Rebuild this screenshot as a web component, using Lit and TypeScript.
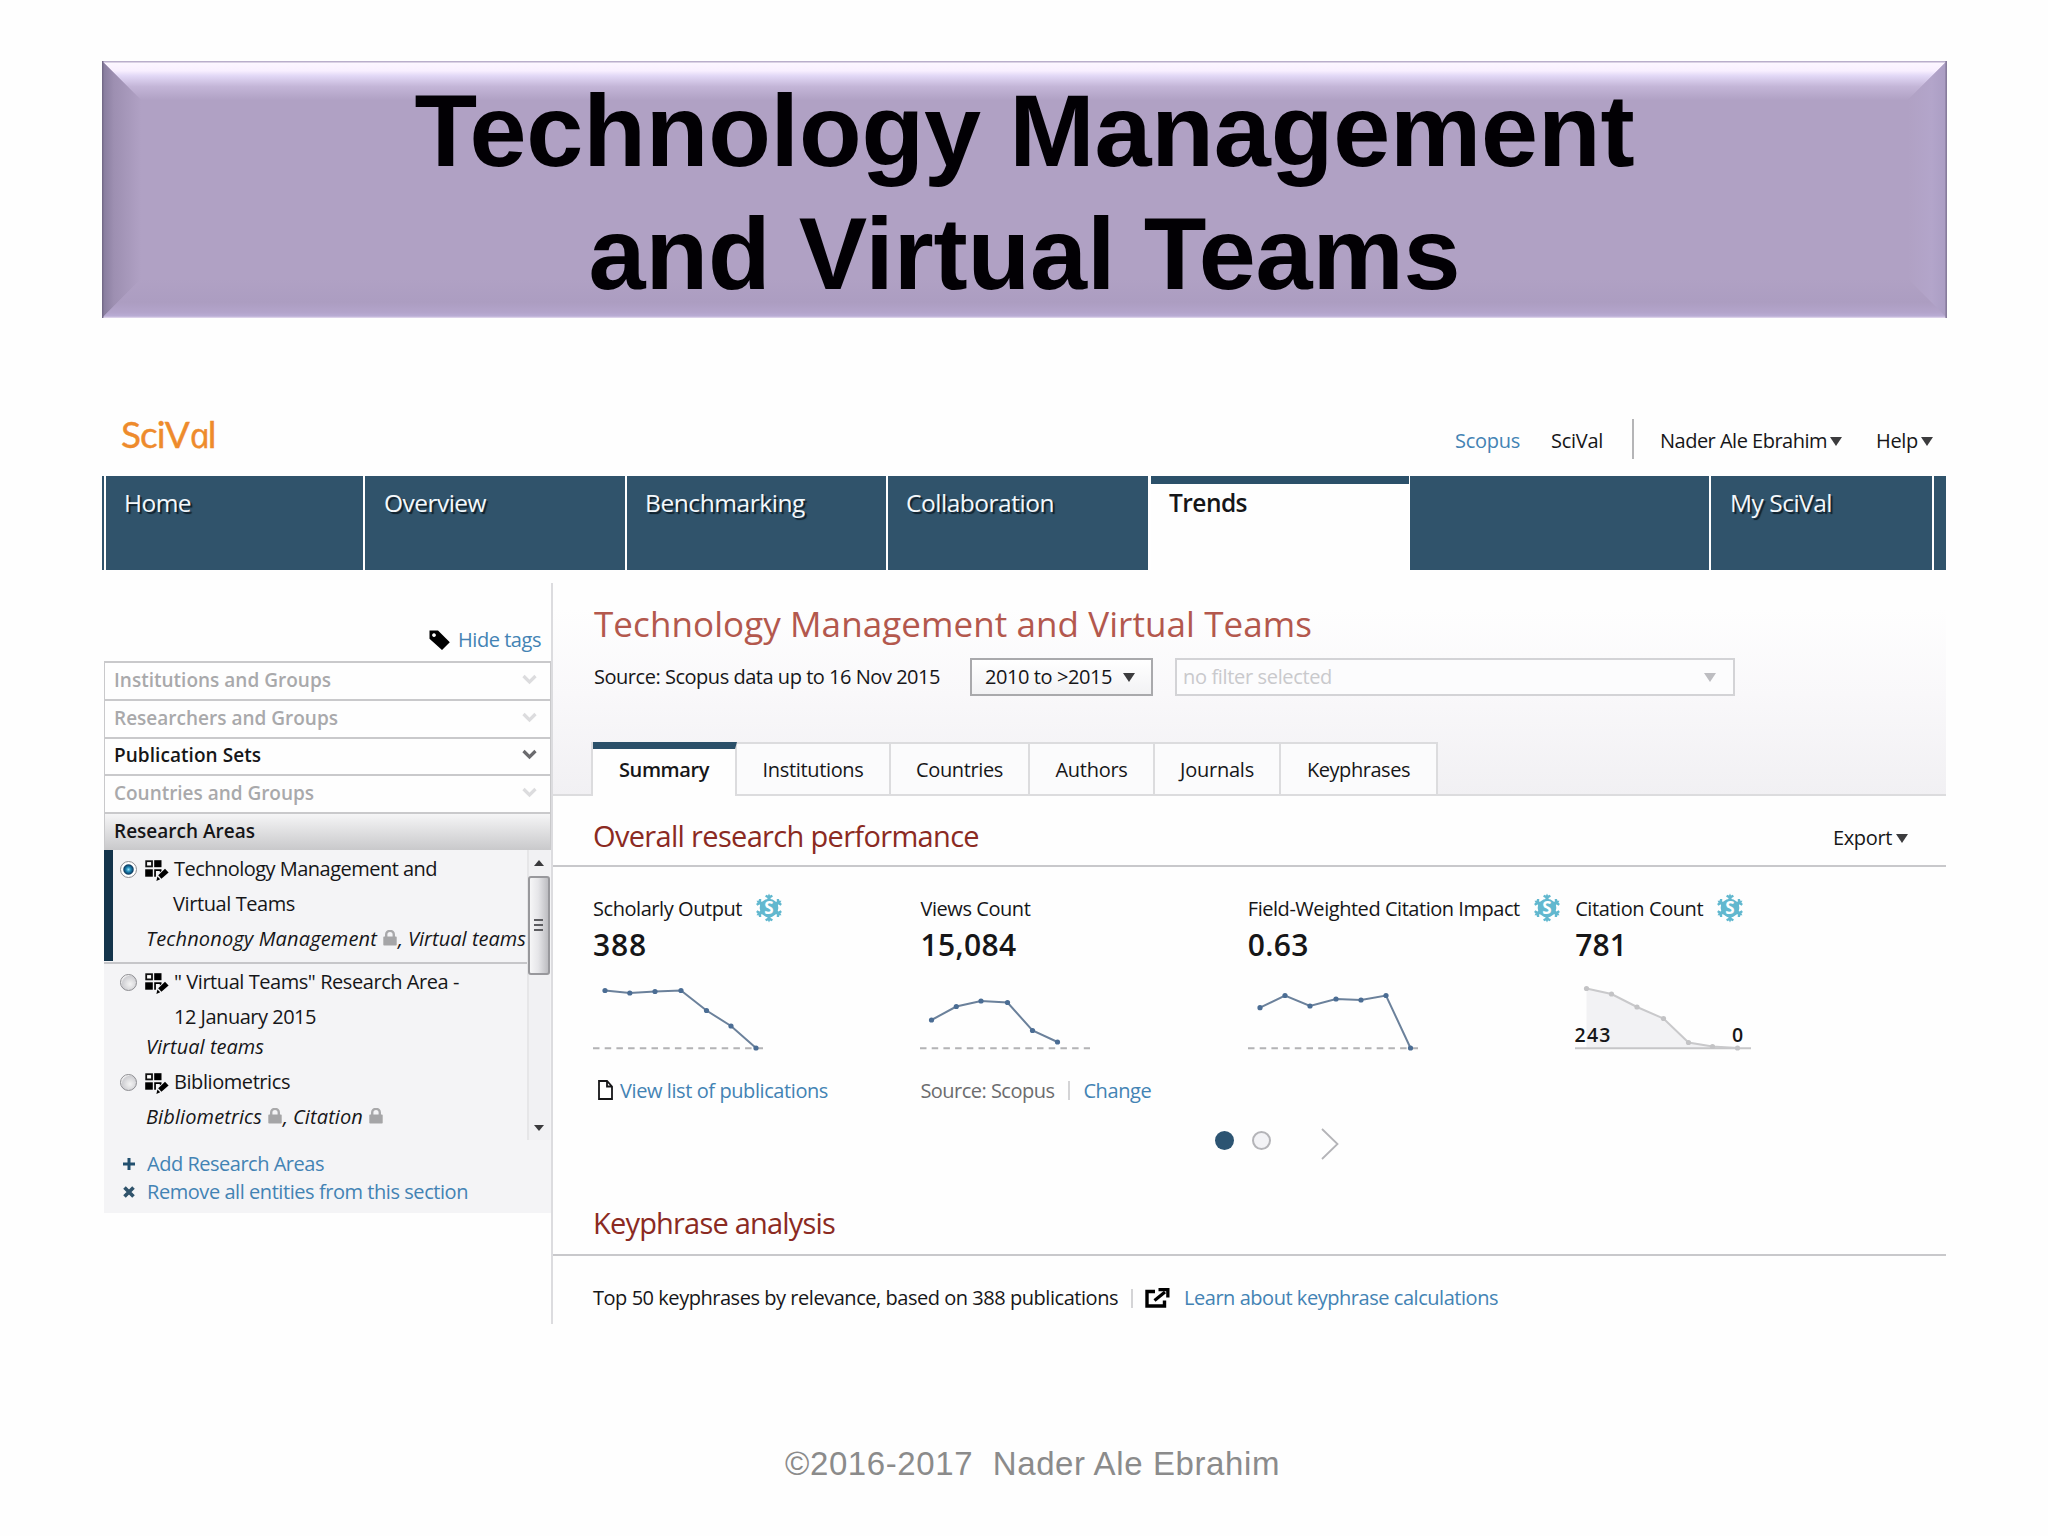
import { LitElement, html, svg, css } from "lit";
import { customElement, property } from "lit/decorators.js";

/* A single line of text tracked so that it fills an exact measure. */
@customElement("fit-text")
class FitText extends LitElement {
  @property({ type: Number }) w = 0;
  static styles = css`
    :host { display: block; flex: none; white-space: pre; }
    .ink { display: inline-block; white-space: pre; }
  `;
  firstUpdated() {
    const ink = this.renderRoot.querySelector(".ink") as HTMLElement;
    const count = (this.textContent || "").length;
    if (!this.w || !count) return;
    const natural = ink.getBoundingClientRect().width;
    this.style.width = `${this.w}px`;
    ink.style.letterSpacing = `${((this.w - natural) / count).toFixed(3)}px`;
  }
  render() {
    return html`<span class="ink"><slot></slot></span>`;
  }
}

type Pt = [number, number];

interface Metric {
  label: string;
  labelW: number;
  value: string;
  valueW: number;
  badge: boolean;
  points: Pt[];
  axis: number;
  area?: boolean;
}

const METRICS: Metric[] = [
  {
    label: "Scholarly Output", labelW: 149, value: "388", valueW: 54, badge: true, axis: 171,
    points: [[13, 25.5], [37.8, 28], [63, 26.5], [89, 25.5], [114.5, 45.5], [139, 61], [164, 83]],
  },
  {
    label: "Views Count", labelW: 110, value: "15,084", valueW: 96, badge: false, axis: 171,
    points: [[12.5, 55], [37.3, 41.5], [62, 36], [88.5, 37.5], [113.5, 65.5], [138.5, 77]],
  },
  {
    label: "Field-Weighted Citation Impact", labelW: 272, value: "0.63", valueW: 61, badge: true, axis: 171,
    points: [[13, 42.7], [38, 30.5], [63, 41], [89, 34], [114, 35], [139, 30.5], [163.5, 83]],
  },
  {
    label: "Citation Count", labelW: 128, value: "781", valueW: 52, badge: true, axis: 177, area: true,
    points: [[12.5, 23.5], [37.5, 29], [63, 42], [89.5, 53.5], [114.5, 77.5], [138.5, 81.5], [163.5, 83]],
  },
];

const SECTIONS = [
  { name: "Institutions and Groups", w: 217, state: "off" },
  { name: "Researchers and Groups", w: 224, state: "off" },
  { name: "Publication Sets", w: 147, state: "on" },
  { name: "Countries and Groups", w: 200, state: "off" },
];

const TABS = [
  { name: "Institutions", w: 101, cls: "t1" },
  { name: "Countries", w: 87, cls: "t2" },
  { name: "Authors", w: 72, cls: "t3" },
  { name: "Journals", w: 74, cls: "t4" },
  { name: "Keyphrases", w: 103, cls: "t5" },
];

const tri = (cls = "") => html`<svg class="tri ${cls}" width="12" height="9" viewBox="0 0 12 9"><path d="M0 0H12L6 9Z" /></svg>`;

const chevron = html`<svg class="chev" width="15" height="11" viewBox="0 0 15 11"><path d="M1.5 2L7.5 8L13.5 2" /></svg>`;

const lock = html`<svg class="lock" width="14" height="16" viewBox="0 0 14 16">
  <path d="M3.2 8V4.6A3.8 3.8 0 0 1 10.8 4.6V8" fill="none" stroke="#a9a9ab" stroke-width="2.4" />
  <rect x="0.3" y="6.6" width="13.4" height="9" rx="0.8" fill="#a5a5a7" />
</svg>`;

const areaIcon = html`<svg class="area-icon" width="24" height="21" viewBox="0 0 24 21">
  <rect x="1.2" y="1.2" width="5.8" height="5.2" fill="#fff" stroke="#111" stroke-width="1.8" />
  <rect x="9.2" y="0.2" width="7.3" height="7" />
  <rect x="0.2" y="9.3" width="7.6" height="7.4" />
  <path d="M9.2 9.3H16.5V11L14.8 12.6V10.9H10.9V16.7H9.2Z" />
  <path d="M13.2 15.2L20 8.8L23.6 12.6L16.4 18.8Z" />
  <path d="M12.4 16.4L15.2 19.3L11.4 20.9Z" />
</svg>`;

const badge = html`<svg class="badge" width="28" height="30" viewBox="-14 -15 28 30">
  ${[0, 60, 120, 180, 240, 300].map(
    (a) => svg`<path transform="rotate(${a})" fill="#62b8cf" d="M-1.6 -8V-10L-3.9 -11.2L-2.9 -13.2L-1 -12.6L0 -14.4L1 -12.6L2.9 -13.2L3.9 -11.2L1.6 -10V-8Z" />`
  )}
  <circle r="9.3" fill="#62b8cf" />
  <text class="badge-s" x="0" y="6" text-anchor="middle">S</text>
</svg>`;

const chart = (m: Metric) => {
  const line = m.points.map((p) => p.join(",")).join(" ");
  const first = m.points[0][0];
  const last = m.points[m.points.length - 1][0];
  return html`<svg class="chart ${m.area ? "muted" : ""}" width="190" height="101" viewBox="0 0 190 101">
    ${m.area ? svg`<polygon class="fill" points="${first},83 ${line} ${last},83" />` : ""}
    <line class="axis" x1="1" y1="83.3" x2=${m.axis} y2="83.3" />
    <polyline points=${line} />
    ${m.points.map((p) => svg`<circle cx=${p[0]} cy=${p[1]} r="2.6" />`)}
    ${m.area
      ? svg`<text x="0.5" y="76.5" textLength="36">243</text><text x="158" y="76.5">0</text>`
      : ""}
  </svg>`;
};

@customElement("app-root")
class AppRoot extends LitElement {
  static styles = css`
    :host {
      display: block; width: 2048px; height: 1536px; overflow: hidden; box-sizing: border-box;
      padding: 61px 102px 0; background: #fefefe; color: #161618;
      font: 20px/1 "Open Sans", "Noto Sans", sans-serif;
    }
    * { box-sizing: border-box; }
    svg { display: block; flex: none; }
    .row { display: flex; align-items: center; }
    .link { color: #4383b4; }

    .banner {
      position: relative; width: 1845px; height: 257px; background: #b0a1c4;
      padding-top: 9px; overflow: hidden;
    }
    .bevel { position: absolute; inset: 0; }
    .banner-line {
      position: relative; height: 122.7px; display: flex; justify-content: center; line-height: 122.7px;
      font-family: "Liberation Sans", Arial, sans-serif; font-weight: 700; font-size: 102.6px; color: #020004;
    }

    .top { height: 158px; padding-top: 99px; display: flex; line-height: 44px; }
    .logo {
      width: 1353px; padding-left: 19px; display: flex; color: #ee8b2c; line-height: 44px; margin-top: -5px;
      font: 37px/44px Lato, "Open Sans", sans-serif; letter-spacing: -0.9px; -webkit-text-stroke: 0.4px #ee8b2c;
    }
    .logo .slope { display: inline-block; font-family: "Open Sans", sans-serif; font-style: italic; font-size: 35px; transform: skewX(12deg); }
    .account { height: 44px; }
    .account fit-text, .account .tri { transform: translateY(2px); }
    .account .sep { width: 2px; height: 40px; background: #b5b5b7; margin: 0 26px 0 29px; }
    .g-scopus { margin-right: 31px; }
    .g-nader { margin-right: 3px; }
    .g-help { margin: 0 3px 0 34px; }
    .tri { fill: #3c3c3e; }
    .tri.pale { fill: #bdbdc1; }

    .nav { display: flex; width: 1844px; height: 94px; background: #fff; font-size: 24.5px; line-height: 54px; color: #f4f8fb; }
    .nav > div { background: #30536b; margin-right: 2px; text-shadow: 2px 2px 1px #10202b; padding-left: 19px; }
    .nav > .strip { width: 2px; padding: 0; }
    .nav > .home { width: 257px; padding-left: 18px; }
    .nav > .over { width: 260px; }
    .nav > .bench { width: 259px; padding-left: 18px; }
    .nav > .collab { width: 260px; padding-left: 18px; margin-right: 3px; }
    .nav > .trends {
      width: 258px; padding-left: 18px; background: #fefefe; border-top: 8px solid #2b5069; line-height: 38px;
      color: #161618; font-weight: 600; text-shadow: none; margin-right: 1px;
    }
    .nav > .blank { width: 299px; padding: 0; }
    .nav > .mine { width: 221px; }
    .nav > .tail { flex: 1; margin: 0; padding: 0; }

    .body { display: flex; padding-top: 13px; width: 1844px; }
    .side { width: 449px; padding: 34px 0 0 2px; }
    .hide { height: 44px; padding-top: 2px; justify-content: flex-end; padding-right: 10px; }
    .hide svg { margin-right: 7px; }
    .sec {
      height: 37.8px; border: 2px solid #c9c9cb; border-width: 2px 1px 0; padding: 0 13px 1px 9px;
      display: flex; align-items: center; justify-content: space-between; font-weight: 600; font-size: 19px;
    }
    .sec.off { color: #a9a9ab; }
    .sec.open { background: linear-gradient(#f5f5f6, #c9c9cb); }
    .chev { fill: none; stroke: #6b6b6e; stroke-width: 3.2; transform: translateY(-1px); }
    .off .chev { stroke: #dcdcde; }
    .panel { background: #f4f4f6; }
    .listbox { display: flex; height: 290px; }
    .items { width: 423px; overflow: hidden; }
    .item { padding-left: 16px; }
    .item.sel { border-left: 9px solid #14344b; padding: 2px 0 0 7px; height: 111px; }
    .rule { height: 3px; background: #c6c6c9; border-top: 1px solid #f4f4f6; margin-bottom: 1px; }
    .l35 { height: 35px; }
    .l24 { height: 24px; }
    .pad53 { padding-left: 53px; }
    .pad54 { padding-left: 54px; }
    .tags { padding-left: 26px; font-style: italic; }
    .tags .lock { margin: 0 1px 0 6px; transform: translateY(-1px); }
    .tags .comma { width: 10px; }
    .third { padding-top: 6px; }
    .area-icon { margin: 0 5px 0 8px; transform: translateY(1px); }
    .radio {
      width: 17px; height: 17px; border-radius: 50%; border: 1.5px solid #8d8d91; flex: none;
      background: radial-gradient(circle at 60% 60%, #f4f4f4, #cfcfd3 60%, #fff 75%);
    }
    .radio.checked { background: radial-gradient(circle at 50% 50%, #8fe0f8 0, #1e86b5 22%, #0d3d63 44%, #fff 54%); }
    .bar { width: 23px; border-left: 2px solid #e6e6e8; background: #f1f1f3; display: flex; flex-direction: column; align-items: center; padding: 10px 2px 9px 0; }
    .bar .up, .bar .down { fill: #3a3a3c; }
    .thumb {
      width: 22px; height: 99px; margin-top: 10px; border: 2px solid #98989c; border-radius: 3px;
      background: linear-gradient(90deg, #f6f6f7, #e6e6e9 45%, #bdbdc1); display: flex; flex-direction: column;
      align-items: center; padding-top: 41px; gap: 3px;
    }
    .thumb i { width: 9px; height: 2px; background: #5d5d61; }
    .down { margin-top: auto; }
    .acts { padding: 10px 0 7px 19px; }
    .acts .row { height: 28px; }
    .acts svg { margin-right: 12px; }

    .main { width: 1395px; height: 741px; border-left: 2px solid #dcdcdf; }
    .head { height: 213px; padding-top: 6px; background: linear-gradient(#fefefe 12%, #f9f8fa 52%, #f1f0f3); }
    .title { height: 69px; padding-left: 41px; font-size: 35px; color: #b3584d; }
    .filters { height: 38px; padding-left: 41px; }
    .pick {
      height: 38px; width: 183px; margin-left: 30px; border: 2px solid #a9a9ac; padding: 0 16px 0 13px;
      display: flex; align-items: center; justify-content: space-between; background: linear-gradient(#fff, #f2f2f4);
    }
    .pick.none { width: 560px; margin-left: 22px; border-color: #d3d3d6; padding: 0 17px 0 6px; color: #c9c9cc; background: #fcfcfd; }
    .tabs { display: flex; height: 54px; margin-top: 46px; }
    .tabs > div {
      border: 2px solid #dcdcde; border-left: 0; background: #fbfbfc; display: flex; align-items: center; justify-content: center; height: 54px; padding-top: 1px;
    }
    .tabs > .lead { width: 40px; background: none; border-width: 0 0 2px; border-right: 2px solid #dcdcde; margin-top: 0; }
    .tabs > .rest { flex: 1; background: none; border-width: 0 0 2px; }
    .tabs > .t0 { width: 144px; border: 0; border-right: 2px solid #dcdcde; border-top: 7px solid #2b5069; padding-bottom: 6px; background: #fefefe; font-weight: 600; }
    .t1 { width: 154px; } .t2 { width: 139px; } .t3 { width: 125px; } .t4 { width: 126px; } .t5 { width: 157px; }

    .sect { height: 71px; padding: 9px 54px 0 40px; border-bottom: 2px solid #c8c8cb; justify-content: space-between; }
    .sect .cap { font-size: 29px; color: #8b2a22; }
    .sect .export { transform: translateY(3px); gap: 4px; margin-right: -16px; }
    .sect.second { height: 66px; margin-top: 22px; padding-top: 0; }
    .metrics { display: grid; grid-template-columns: repeat(4, 327.4px); padding: 26px 0 0 39px; height: 246px; }
    .lab { height: 32px; padding-left: 1px; }
    .lab .badge { transform: translateY(-1px); }
    .val { height: 40px; padding-left: 1px; font-size: 30px; font-weight: 600; }
    .badge { margin-left: 13px; }
    .badge-s { font: 700 17px "Open Sans", sans-serif; fill: #fff; }
    .chart polyline { fill: none; stroke: #6b819b; stroke-width: 2; }
    .chart circle { fill: #4b6d94; }
    .chart .axis { stroke: #b3b3b5; stroke-width: 2; stroke-dasharray: 6.5 5.2; }
    .muted polyline { stroke: #c9c9cb; }
    .muted circle { fill: #c3c3c5; }
    .muted .axis { stroke: #c6c6c8; stroke-dasharray: none; }
    .muted .fill { fill: #f2f2f4; }
    .chart text { font: 600 19.5px "Open Sans", sans-serif; fill: #161618; }
    .foot { height: 49px; }
    .foot .doc { margin: 0 7px 0 6px; transform: translateY(-1px); }
    .foot .gray { color: #6c6c6e; margin-left: 1px; }
    .vbar { width: 2px; height: 19px; background: #d4d4d6; }
    .foot .vbar { margin: 0 13px 0 14px; }
    .pager { height: 55px; padding-left: 662px; }
    .dot { width: 19px; height: 19px; border-radius: 50%; background: #2c5472; }
    .dot.next { background: #f3f3f6; border: 2px solid #b4b4b8; margin: 0 50px 0 18px; }
    .pager svg { transform: translateY(3px); }
    .keys { height: 54px; margin-top: 15px; padding-left: 40px; }
    .keys .vbar { margin: 0 12px 0 13px; }
    .keys svg { margin-right: 14px; }

    .credit {
      margin-top: 114px; padding-left: 683px; height: 52px; line-height: 52px;
      font-family: "Liberation Sans", Arial, sans-serif; font-size: 33px; color: #8b8b8b;
    }
  `;

  render() {
    return html`
      <div class="banner">
        <svg class="bevel" width="1845" height="257" viewBox="0 0 1845 257">
          <defs>
            <linearGradient id="bt" x1="0" y1="0" x2="0" y2="1">
              <stop offset="0" stop-color="#fdf8ff" /><stop offset="0.25" stop-color="#f8efff" />
              <stop offset="0.38" stop-color="#e2d8f6" /><stop offset="0.65" stop-color="#c4b6d8" />
              <stop offset="1" stop-color="#b0a1c4" />
            </linearGradient>
            <linearGradient id="bl"><stop offset="0" stop-color="#857a9b" /><stop offset="0.3" stop-color="#9d8fb1" /><stop offset="1" stop-color="#b0a1c4" /></linearGradient>
            <linearGradient id="br"><stop offset="0" stop-color="#b0a1c4" /><stop offset="0.6" stop-color="#b3a5ca" /><stop offset="1" stop-color="#aa9dc3" /></linearGradient>
            <linearGradient id="bb" x1="0" y1="0" x2="0" y2="1"><stop offset="0" stop-color="#b0a1c4" /><stop offset="0.6" stop-color="#ac9dc1" /><stop offset="0.86" stop-color="#b3a4cb" /><stop offset="0.95" stop-color="#b9acd4" /><stop offset="1" stop-color="#e6dcf0" /></linearGradient>
          </defs>
          <path d="M0 0H1845L1806 39H39Z" fill="url(#bt)" />
          <path d="M0 0L39 39V218L0 257Z" fill="url(#bl)" />
          <path d="M1845 0L1806 39V218L1845 257Z" fill="url(#br)" />
          <path d="M0 257L39 218H1806L1845 257Z" fill="url(#bb)" />
          <path d="M0 0.8H1845" stroke="#b9aecb" stroke-width="1.6" />
          <path d="M1844.2 0V257" stroke="#877c9c" stroke-width="1.6" />
          <path d="M0.7 0V257" stroke="#746a88" stroke-width="1.4" />
        </svg>
        <div class="banner-line"><fit-text w="1220">Technology Management</fit-text></div>
        <div class="banner-line"><fit-text w="872">and Virtual Teams</fit-text></div>
      </div>

      <div class="top">
        <div class="logo"><span>SciV<span class="slope">a</span>l</span></div>
        <div class="account row">
          <fit-text class="link g-scopus" w="65">Scopus</fit-text>
          <fit-text w="52">SciVal</fit-text>
          <span class="sep"></span>
          <fit-text class="g-nader" w="167">Nader Ale Ebrahim</fit-text>${tri()}
          <fit-text class="g-help" w="42">Help</fit-text>${tri()}
        </div>
      </div>

      <div class="nav">
        <div class="strip"></div>
        <div class="home"><fit-text w="67">Home</fit-text></div>
        <div class="over"><fit-text w="102">Overview</fit-text></div>
        <div class="bench"><fit-text w="160">Benchmarking</fit-text></div>
        <div class="collab"><fit-text w="148">Collaboration</fit-text></div>
        <div class="trends"><fit-text w="78">Trends</fit-text></div>
        <div class="blank"></div>
        <div class="mine"><fit-text w="102">My SciVal</fit-text></div>
        <div class="tail"></div>
      </div>

      <div class="body">
        <div class="side">
          <div class="hide row">
            <svg width="22" height="21" viewBox="0 0 22 21"><path fill-rule="evenodd" d="M0.5 0.5H9L20.8 12.2L13 20L0.5 8.8ZM5 3.2A1.9 1.9 0 1 0 5.01 3.2Z" /></svg>
            <fit-text class="link" w="83">Hide tags</fit-text>
          </div>
          ${SECTIONS.map((s) => html`<div class="sec ${s.state}"><fit-text w=${s.w}>${s.name}</fit-text>${chevron}</div>`)}
          <div class="sec open"><fit-text w="141">Research Areas</fit-text></div>
          <div class="panel">
            <div class="listbox">
              <div class="items">
                <div class="item sel">
                  <div class="row l35"><span class="radio checked"></span>${areaIcon}<fit-text w="263">Technology Management and</fit-text></div>
                  <div class="row l35 pad53"><fit-text w="122">Virtual Teams</fit-text></div>
                  <div class="row l35 tags"><fit-text w="231">Technonogy Management</fit-text>${lock}<span class="comma">,</span><fit-text w="118">Virtual teams</fit-text></div>
                </div>
                <div class="rule"></div>
                <div class="item">
                  <div class="row l35"><span class="radio"></span>${areaIcon}<fit-text w="285">" Virtual Teams" Research Area -</fit-text></div>
                  <div class="row l35 pad54"><fit-text w="142">12 January 2015</fit-text></div>
                  <div class="row l24 tags"><fit-text w="118">Virtual teams</fit-text></div>
                </div>
                <div class="item third">
                  <div class="row l35"><span class="radio"></span>${areaIcon}<fit-text w="116">Bibliometrics</fit-text></div>
                  <div class="row l35 tags"><fit-text w="116">Bibliometrics</fit-text>${lock}<span class="comma">,</span><fit-text w="70">Citation</fit-text>${lock}</div>
                </div>
              </div>
              <div class="bar">
                <svg class="up" width="10" height="6" viewBox="0 0 10 6"><path d="M0 6H10L5 0Z" /></svg>
                <div class="thumb"><i></i><i></i><i></i></div>
                <svg class="down" width="10" height="6" viewBox="0 0 10 6"><path d="M0 0H10L5 6Z" /></svg>
              </div>
            </div>
            <div class="acts">
              <div class="row"><svg width="12" height="12" viewBox="0 0 12 12"><path d="M6 0V12M0 6H12" stroke="#22506f" stroke-width="3" /></svg><fit-text class="link" w="177">Add Research Areas</fit-text></div>
              <div class="row"><svg width="12" height="12" viewBox="0 0 12 12"><path d="M1.5 1.5L10.5 10.5M10.5 1.5L1.5 10.5" stroke="#30536b" stroke-width="3.6" /></svg><fit-text class="link" w="321">Remove all entities from this section</fit-text></div>
            </div>
          </div>
        </div>

        <div class="main">
          <div class="head">
            <div class="title row"><fit-text w="718">Technology Management and Virtual Teams</fit-text></div>
            <div class="filters row">
              <fit-text w="346">Source: Scopus data up to 16 Nov 2015</fit-text>
              <div class="pick"><fit-text w="127">2010 to >2015</fit-text>${tri()}</div>
              <div class="pick none"><fit-text w="149">no filter selected</fit-text>${tri("pale")}</div>
            </div>
            <div class="tabs">
              <div class="lead"></div>
              <div class="t0"><fit-text w="90">Summary</fit-text></div>
              ${TABS.map((t) => html`<div class=${t.cls}><fit-text w=${t.w}>${t.name}</fit-text></div>`)}
              <div class="rest"></div>
            </div>
          </div>

          <div class="sect row">
            <fit-text class="cap" w="386">Overall research performance</fit-text>
            <div class="export row"><fit-text w="59">Export</fit-text>${tri()}</div>
          </div>

          <div class="metrics">
            ${METRICS.map(
              (m, i) => html`<div class="metric">
                <div class="lab row"><fit-text w=${m.labelW}>${m.label}</fit-text>${m.badge ? badge : ""}</div>
                <div class="val row"><fit-text w=${m.valueW}>${m.value}</fit-text></div>
                ${chart(m)}
                ${i === 0
                  ? html`<div class="foot row">
                      <svg class="doc" width="15" height="20" viewBox="0 0 15 20"><path d="M1 1H9L14 6.5V19H1ZM9 1V6.5H14" fill="#fff" stroke="#161618" stroke-width="1.8" /></svg>
                      <fit-text class="link" w="208">View list of publications</fit-text>
                    </div>`
                  : ""}
                ${i === 1
                  ? html`<div class="foot row">
                      <fit-text class="gray" w="134">Source: Scopus</fit-text><span class="vbar"></span><fit-text class="link" w="68">Change</fit-text>
                    </div>`
                  : ""}
              </div>`
            )}
          </div>

          <div class="pager row">
            <span class="dot"></span><span class="dot next"></span>
            <svg width="18" height="32" viewBox="0 0 18 32"><path d="M1 1L16.5 16L1 31" fill="none" stroke="#b4b4b8" stroke-width="1.8" /></svg>
          </div>

          <div class="sect second row"><fit-text class="cap" w="242">Keyphrase analysis</fit-text></div>
          <div class="keys row">
            <fit-text w="525">Top 50 keyphrases by relevance, based on 388 publications</fit-text>
            <span class="vbar"></span>
            <svg width="25" height="20" viewBox="0 0 25 20"><path d="M10 3.5H2V18H19.5V12.5" fill="none" stroke="#000" stroke-width="3.4" /><path d="M9.5 12.5L20 4" stroke="#000" stroke-width="3.2" /><path d="M13.5 0H24.5V9.5H21.2V3.2H13.5Z" /></svg>
            <fit-text class="link" w="314">Learn about keyphrase calculations</fit-text>
          </div>
        </div>
      </div>

      <div class="credit"><fit-text w="495">©2016-2017  Nader Ale Ebrahim</fit-text></div>
    `;
  }
}
